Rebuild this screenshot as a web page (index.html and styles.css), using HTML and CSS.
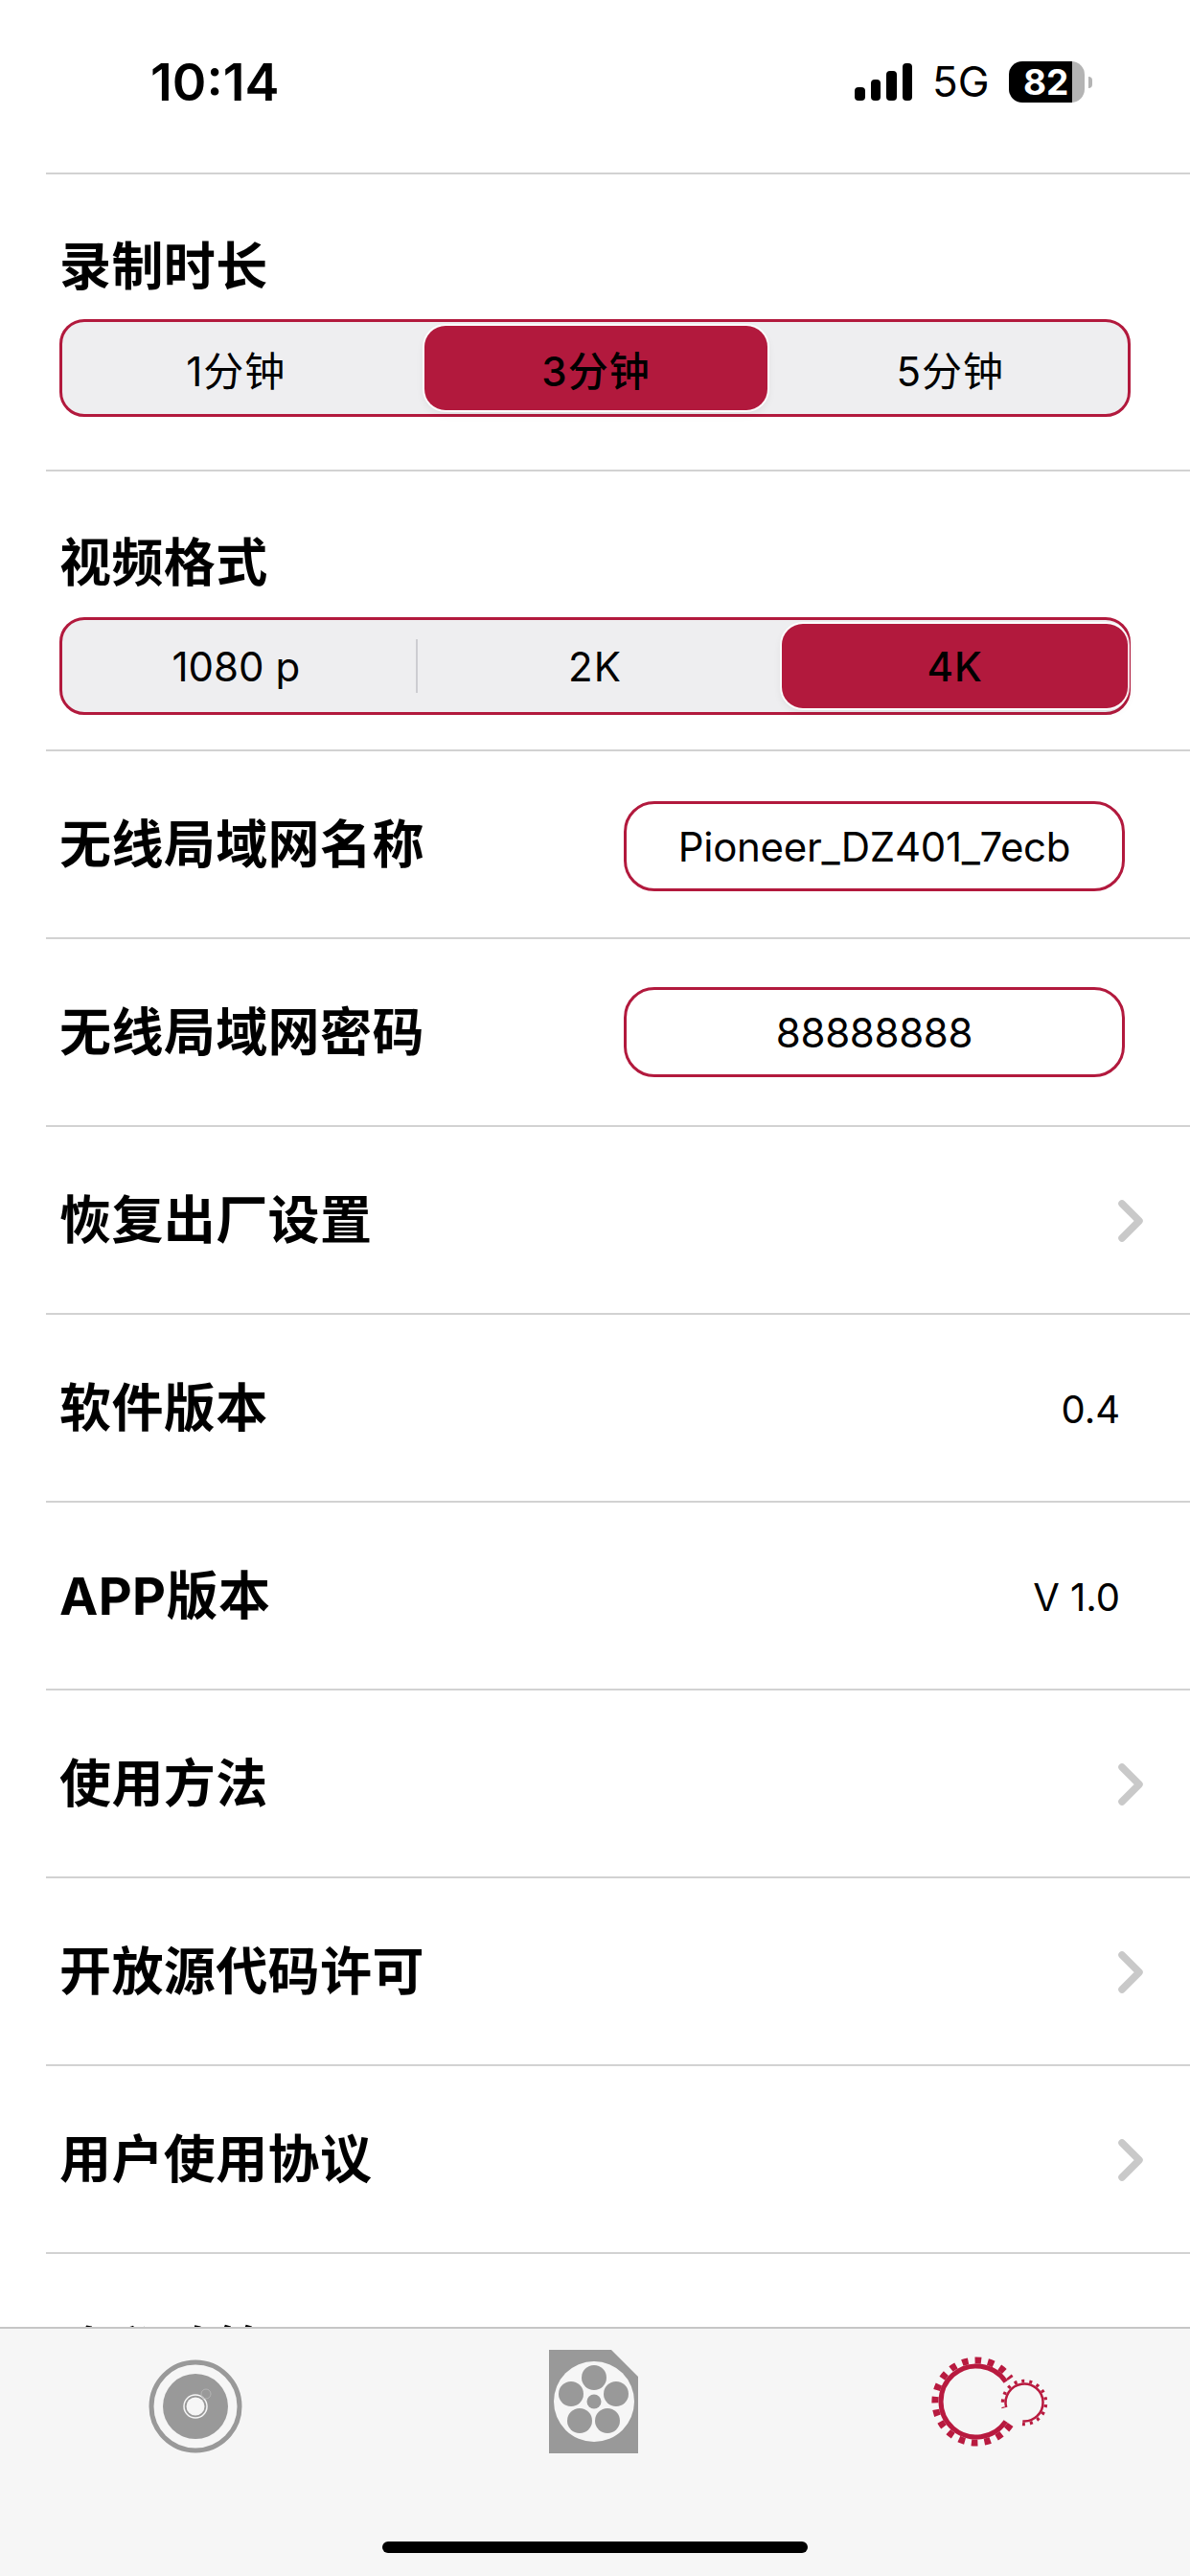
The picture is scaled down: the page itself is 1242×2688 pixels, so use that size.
FILE: index.html
```html
<!DOCTYPE html>
<html lang="zh-CN">
<head>
<meta charset="utf-8">
<title>设置</title>
<link rel="stylesheet" href="styles.css">
</head>
<body>
<div class="screen">
  <header class="status">
    <span class="time">10:14</span>
    <div class="status-right">
      <div class="signal"><i class="b1"></i><i class="b2"></i><i class="b3"></i><i class="b4"></i></div>
      <span class="net">5G</span>
      <div class="battery"><div class="cell"><span>82</span></div><div class="nub"></div></div>
    </div>
  </header>
  <main class="list">
    <section class="block first">
      <h2 class="label">录制时长</h2>
      <div class="seg">
        <div class="opt">1分钟</div>
        <div class="opt on mid">3分钟</div>
        <div class="opt">5分钟</div>
      </div>
    </section>
    <section class="block second">
      <h2 class="label">视频格式</h2>
      <div class="seg">
        <div class="opt div">1080 p</div>
        <div class="opt">2K</div>
        <div class="opt on end">4K</div>
      </div>
    </section>
    <div class="row"><span class="label">无线局域网名称</span><div class="field low">Pioneer_DZ401_7ecb</div></div>
    <div class="row"><span class="label">无线局域网密码</span><div class="field">88888888</div></div>
    <div class="row"><span class="label">恢复出厂设置</span><svg class="chev" viewBox="0 0 30 46"><path d="M5 5 L23 23 L5 41"/></svg></div>
    <div class="row"><span class="label">软件版本</span><span class="value">0.4</span></div>
    <div class="row"><span class="label">APP版本</span><span class="value">V 1.0</span></div>
    <div class="row"><span class="label">使用方法</span><svg class="chev" viewBox="0 0 30 46"><path d="M5 5 L23 23 L5 41"/></svg></div>
    <div class="row"><span class="label">开放源代码许可</span><svg class="chev" viewBox="0 0 30 46"><path d="M5 5 L23 23 L5 41"/></svg></div>
    <div class="row"><span class="label">用户使用协议</span><svg class="chev" viewBox="0 0 30 46"><path d="M5 5 L23 23 L5 41"/></svg></div>
    <div class="row peek"><span class="label">隐私政策</span><svg class="chev" viewBox="0 0 30 46"><path d="M5 5 L23 23 L5 41"/></svg></div>
  </main>
  <nav class="tabs">
    <svg class="tab" viewBox="0 0 180 130">
      <circle class="g-line" cx="87" cy="81" r="46"/>
      <circle class="g-fill" cx="87" cy="81" r="34"/>
      <circle class="hole" cx="87" cy="81" r="9.5"/>
      <circle class="ring" cx="87" cy="81" r="12"/>
      <circle class="ring thin" cx="98" cy="68" r="5"/>
    </svg>
    <svg class="tab" viewBox="0 0 180 130">
      <path class="g-fill" d="M42 22 H107 L135 50 V130 H42 Z"/>
      <circle class="hole" cx="89" cy="76" r="42"/>
      <circle class="g-fill" cx="89" cy="51" r="13"/>
      <circle class="g-fill" cx="65" cy="68" r="13"/>
      <circle class="g-fill" cx="112" cy="68" r="13"/>
      <circle class="g-fill" cx="74" cy="96" r="13"/>
      <circle class="g-fill" cx="103" cy="96" r="13"/>
      <circle class="g-fill" cx="89" cy="76" r="7.5"/>
    </svg>
    <svg class="tab" viewBox="0 0 180 130">
      <g class="gear">
        <path class="base" d="M104.7 96.7 A37 37 0 1 1 104.7 55.3"/>
        <path class="teeth" d="M109.6 100 A43 43 0 1 1 109.6 52"/>
      </g>
      <g class="gear small">
        <path class="base" d="M122.3 96.4 A19.5 19.5 0 1 0 105.2 82"/>
        <path class="teeth" d="M122 99.4 A22.5 22.5 0 1 0 102.3 82.8"/>
      </g>
    </svg>
    <div class="home"></div>
  </nav>
</div>
</body>
</html>
```
FILE: styles.css
```css
* { box-sizing: border-box; }
html, body { margin: 0; padding: 0; background: #fff; }
body { font-family: Inter, "Noto Sans CJK SC", sans-serif; color: #000; }
.screen { width: 1242px; height: 2688px; display: flex; flex-direction: column; overflow: hidden; background: #fff; }

.status { height: 180px; flex: none; display: flex; justify-content: space-between; padding: 0 102px 0 157px; }
.time { font-size: 54px; font-weight: 600; line-height: 54px; margin-top: 59px; }
.status-right { display: flex; align-items: flex-start; margin-top: 64px; }
.signal { display: flex; align-items: flex-end; gap: 6px; height: 41px; width: 61px; }
.signal i { display: block; width: 10.5px; background: #000; border-radius: 4px; }
.b1 { height: 14px; } .b2 { height: 22px; } .b3 { height: 31px; } .b4 { height: 39px; }
.net { font-size: 44px; line-height: 44px; font-weight: 400; margin: -1px 0 0 20px; width: 80px; }
.battery { display: flex; align-items: center; height: 43px; }
.cell { width: 79px; height: 43px; border-radius: 14px; background: linear-gradient(90deg, #000 66px, #b4b4b4 66px); color: #fff; font-size: 37px; font-weight: 700; line-height: 43px; padding-left: 15px; }
.nub { width: 4px; height: 12px; margin-left: 4px; background: #b4b4b4; border-radius: 0 6px 6px 0; }

.list { flex: 1; min-height: 0; overflow: hidden; margin-left: 48px; }
.label { margin: 0; font-size: 54px; font-weight: 700; line-height: 64px; white-space: nowrap; letter-spacing: .4px; }
.block { border-top: 2px solid #d2d2d2; padding-left: 14px; }
.block.first { height: 310px; padding-top: 65px; }
.block.second { height: 292px; padding-top: 64px; }
.seg { width: 1118px; height: 102px; margin-top: 22px; border: 3px solid #b2193d; border-radius: 26px; background: #eeeef0; display: grid; grid-template-columns: repeat(3, 1fr); font-size: 42px; letter-spacing: 1px; }
.second .seg { margin-top: 24px; }
.opt { display: flex; align-items: center; justify-content: center; white-space: nowrap; }
.opt:first-child { padding-right: 8px; }
.opt.on { font-weight: 500; background: #b2193d; border-radius: 22px; margin: 4px 0; box-shadow: 0 0 0 2px rgba(255,255,255,.85), 0 4px 10px rgba(0,0,0,.08); }
.opt.mid { margin-left: 7px; margin-right: 5px; }
.opt.end { margin-left: 10px; margin-right: 0; }
.opt.div { position: relative; letter-spacing: 0; }
.opt.div::after { content: ""; position: absolute; right: 0; top: 20px; bottom: 20px; width: 2px; background: #cdcdd1; }

.row { height: 196px; border-top: 2px solid #d2d2d2; padding: 2px 0 0 14px; display: flex; align-items: center; justify-content: space-between; }
.row.peek { padding-top: 10px; }
.field { width: 523px; height: 94px; margin: -2px 68px 0 0; border: 3px solid #b2193d; border-radius: 32px; display: flex; align-items: center; justify-content: center; font-size: 42px; letter-spacing: -.3px; }
.field.low { margin-top: 2px; }
.value { font-size: 40px; margin-right: 73px; }
.chev { width: 30px; height: 46px; margin-right: 46px; fill: none; stroke: #c9c9c9; stroke-width: 7.5; stroke-linecap: round; stroke-linejoin: round; }

.tabs { position: relative; flex: none; height: 260px; border-top: 2px solid #c6c6c6; background: #f6f6f6; display: grid; grid-template-columns: repeat(3, 1fr); justify-items: center; align-content: start; }
.tab { width: 180px; height: 130px; display: block; }
.g-fill { fill: #999; }
.g-line { fill: none; stroke: #999; stroke-width: 5; }
.hole { fill: #f6f6f6; }
.ring { fill: none; stroke: #f6f6f6; stroke-width: 1.5; }
.ring.thin { stroke: #b4b4b4; stroke-width: 1; }
.gear path { fill: none; stroke: #b81a3f; }
.gear .base { stroke-width: 5; }
.gear .teeth { stroke-width: 7; stroke-dasharray: 6.5 7; }
.gear.small .base { stroke-width: 2.5; }
.gear.small .teeth { stroke-width: 3.5; stroke-dasharray: 3 5; }
.home { position: absolute; left: 399px; bottom: 24px; width: 444px; height: 12px; border-radius: 6px; background: #000; }
```
